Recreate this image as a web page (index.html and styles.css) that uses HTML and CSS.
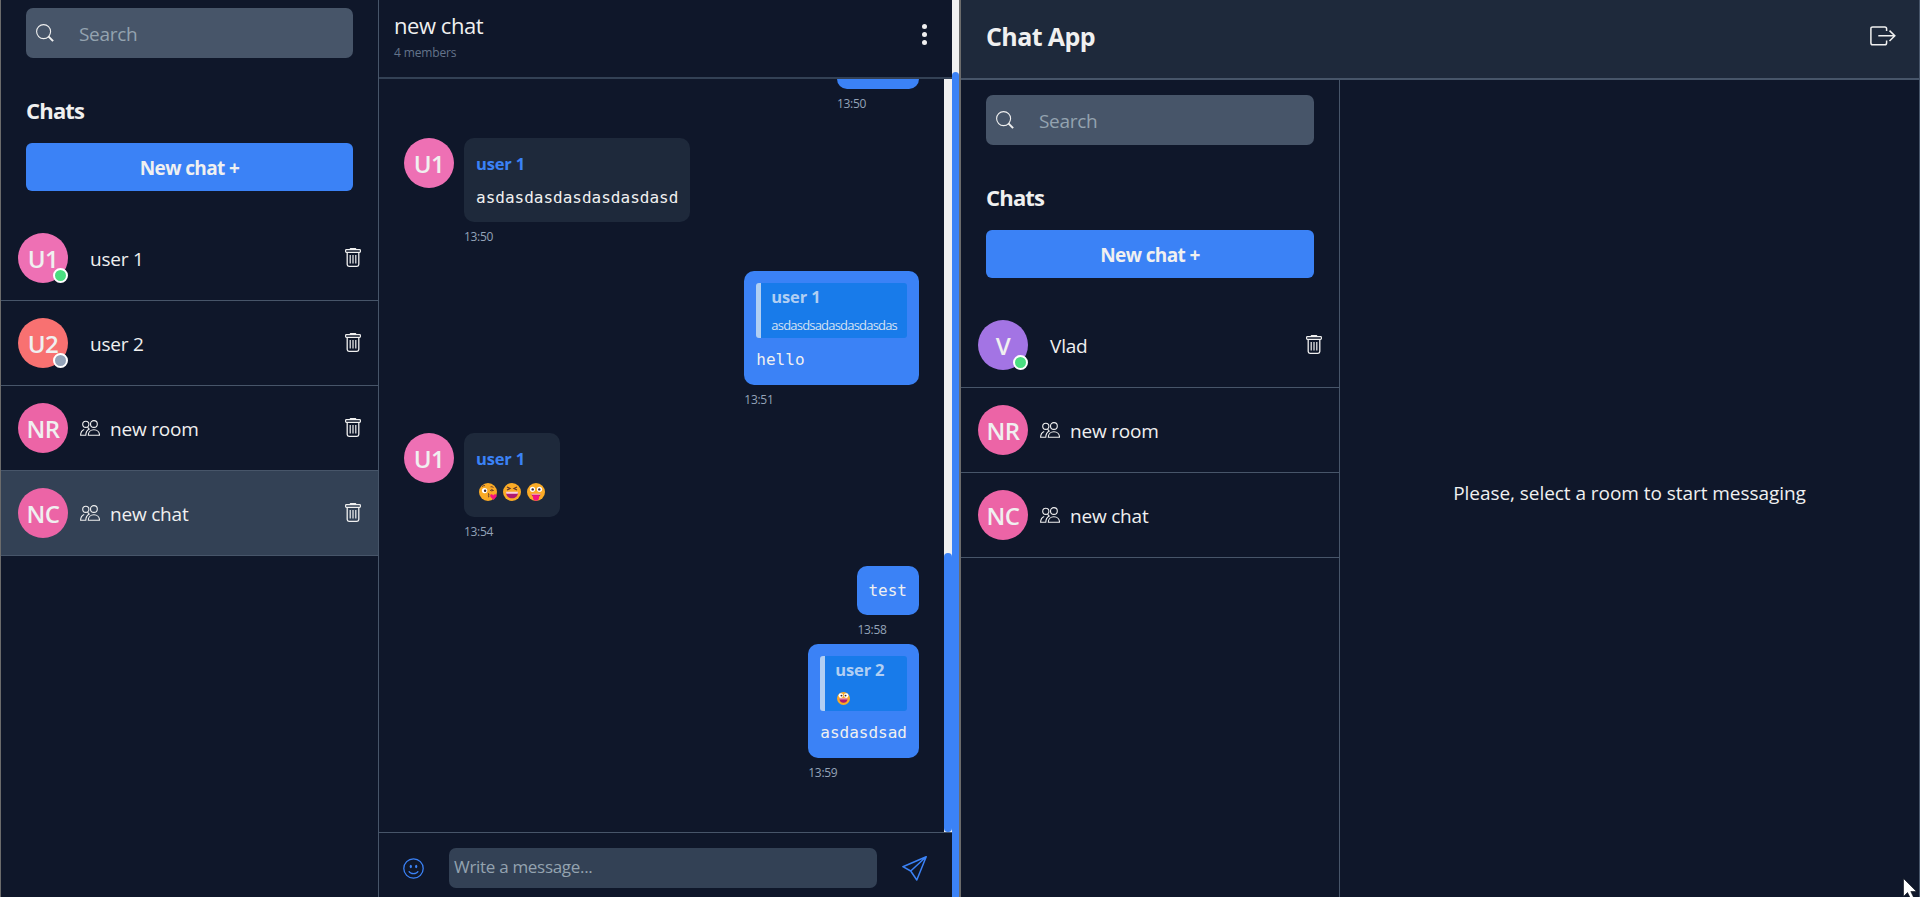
FILE: index.html
```html
<!DOCTYPE html>
<html lang="en">
<head>
<meta charset="utf-8">
<title>Chat App</title>
<link rel="stylesheet" href="styles.css">
</head>
<body>
<svg class="defs" aria-hidden="true">
  <symbol id="i-search" viewBox="0 0 18 18"><circle cx="7.6" cy="7.6" r="7" fill="none" stroke="currentColor" stroke-width="1.1"/><path d="M12.4 12.4l4.7 4.7" fill="none" stroke="currentColor" stroke-width="2"/></symbol>
  <symbol id="i-trash" viewBox="0 0 16 19"><g fill="none" stroke="currentColor"><rect x=".6" y="1.7" width="14.8" height="2.6" rx=".8" stroke-width="1.2"/><path d="M5.2 1.2c0-.5.3-.7.7-.7h4.2c.4 0 .7.2.7.7" stroke-width="1.2"/><path d="M2.2 4.5v12c0 1.2.6 1.8 1.8 1.8h8c1.200 0 1.800-.6 1.800-1.800v-12" stroke-width="1.300"/><path d="M5.200 7v8.500M8 7v8.500M10.800 7v8.500" stroke-width="1.200"/></g></symbol>
  <symbol id="i-group" viewBox="0 0 20 16"><g fill="none" stroke="currentColor" stroke-width="1.100"><circle cx="5.800" cy="4.300" r="3.100"/><circle cx="13.900" cy="4" r="3.400"/><path d="M8.300 15.200C8.300 12 10.600 9.800 13.900 9.800s5.600 2.200 5.600 5.400z"/><path d="M6.300 15.200H.6c0-3 1.300-4.900 3.600-5.800M5.800 15.200c0-3 1.300-5 3.400-6.200L7.500 7.200"/></g></symbol>
  <symbol id="i-logout" viewBox="0 0 26 20"><g fill="none" stroke="currentColor" stroke-width="1.500"><path d="M16.600 5V2.700c0-1.200-.6-1.800-1.800-1.800H2.700C1.500.9.900 1.500.9 2.700v14.200c0 1.200.6 1.800 1.800 1.800h12.100c1.200 0 1.800-.6 1.800-1.800v-2.300M8.300 9.800h16.500M19.500 4.600l5.300 5.200-5.300 5.200"/></g></symbol>
  <symbol id="i-smile" viewBox="0 0 21 21"><circle cx="10.500" cy="10.500" r="9.700" fill="none" stroke="currentColor" stroke-width="1.300"/><ellipse cx="7.800" cy="8.500" rx="1.100" ry="1.800" fill="currentColor"/><ellipse cx="13.200" cy="8.500" rx="1.100" ry="1.800" fill="currentColor"/><path d="M5.800 13.200c1.900 3.300 7.500 3.300 9.400 0" fill="none" stroke="currentColor" stroke-width="1.300"/></symbol>
  <symbol id="i-send" viewBox="0 0 25 25"><path d="M24.200.8L.9 10.700l7.800 4.300 6.100 9L24.200.8zM24.200.8L8.700 15" fill="none" stroke="currentColor" stroke-width="1.500" stroke-linejoin="round"/></symbol>
  <symbol id="e-kiss" viewBox="0 0 18 18"><circle cx="9" cy="9" r="9" fill="#fbab26"/><circle cx="5.600" cy="7.600" r="2.700" fill="#fff"/><circle cx="6.100" cy="7.800" r="1.200" fill="#402a32"/><path d="M3 3.600q1.500-1.300 3-1M11.500 3.800q1.500-.5 3 .7M11 7.800q1.500-2.500 3.500-.3l-2.500.4" fill="none" stroke="#60362d" stroke-width=".9"/><path d="M9 10.500q2 .4.300 1.700 2 .8-.3 2" fill="none" stroke="#60362d"/><path d="M14.600 17l-3.200-3.300c-1-2.400 1.800-3.200 2.800-1.300 1.300-2 4.100-.9 3.400 1.200z" fill="#f5147f"/></symbol>
  <symbol id="e-laugh" viewBox="0 0 18 18"><circle cx="9" cy="9" r="9" fill="#fbab26"/><path d="M4 4l3 1.500L4 7M14 4l-3 1.500L14 7" fill="none" stroke="#60362d" stroke-width="1.200"/><path d="M3 9h12c0 4-2.400 6.300-6 6.300S3 13 3 9z" fill="#b0196f"/><path d="M3 8.800h12l-.3 2H3.300z" fill="#fbd3df"/></symbol>
  <symbol id="e-tongue" viewBox="0 0 18 18"><circle cx="9" cy="9" r="9" fill="#fbab26"/><circle cx="5.500" cy="6.300" r="2.600" fill="#fff"/><circle cx="12.500" cy="6.300" r="2.600" fill="#fff"/><circle cx="5.700" cy="6.400" r="1.200" fill="#402a32"/><circle cx="12.300" cy="6.400" r="1.200" fill="#402a32"/><path d="M4.500 11h9c-.3 2.500-2 3.500-4.500 3.500S4.800 13.500 4.500 11z" fill="#b0196f"/><path d="M4.500 10.600h9v1.300h-9z" fill="#f4a1ad"/><path d="M6 12.300h6v2.500c0 4-6 4-6 0z" fill="#f5147f"/></symbol>
  <symbol id="e-grin" viewBox="0 0 18 18"><circle cx="9" cy="9" r="9" fill="#fbab26"/><circle cx="5.300" cy="5" r="3.200" fill="#fff"/><circle cx="12.700" cy="5" r="3.200" fill="#fff"/><circle cx="6.200" cy="5" r="1.300" fill="#402a32"/><circle cx="11.800" cy="5" r="1.300" fill="#402a32"/><path d="M3.500 9h11c0 4-2 6-5.500 6s-5.500-2-5.500-6z" fill="#b0196f"/><path d="M3.500 8.600h11v1.700h-11z" fill="#f4a1ad"/></symbol>
</svg>

<div class="screen">
  <section class="pane pane-left">
    <aside class="sidebar sidebar-scrolled">
      <div class="search"><svg class="search-icon"><use href="#i-search"/></svg><span>Search</span></div>
      <h2 class="side-title">Chats</h2>
      <button class="new-chat">New chat +</button>
      <ul class="rooms">
        <li class="room"><span class="avatar pink">U1<i class="status online"></i></span><span class="name person">user 1</span><svg class="trash"><use href="#i-trash"/></svg></li>
        <li class="room"><span class="avatar coral">U2<i class="status"></i></span><span class="name person">user 2</span><svg class="trash"><use href="#i-trash"/></svg></li>
        <li class="room"><span class="avatar rose">NR</span><svg class="group"><use href="#i-group"/></svg><span class="name">new room</span><svg class="trash"><use href="#i-trash"/></svg></li>
        <li class="room active"><span class="avatar rose">NC</span><svg class="group"><use href="#i-group"/></svg><span class="name">new chat</span><svg class="trash"><use href="#i-trash"/></svg></li>
      </ul>
    </aside>

    <main class="chat">
      <header class="chat-head">
        <div><h1 class="chat-title">new chat</h1><p class="members">4 members</p></div>
        <div class="dots"><i></i><i></i><i></i></div>
      </header>
      <div class="chat-body">
        <div class="messages">
          <div class="msg own"><div class="stack"><div class="bubble stub"></div><time>13:50</time></div></div>
          <div class="msg"><span class="avatar pink">U1</span><div class="stack"><div class="bubble"><b class="author">user 1</b><p class="text">asdasdasdasdasdasdasd</p></div><time>13:50</time></div></div>
          <div class="msg own"><div class="stack"><div class="bubble quoted"><div class="quote"><b>user 1</b><p>asdasdsadasdasdasdas</p></div><p class="text">hello</p></div><time>13:51</time></div></div>
          <div class="msg rise"><span class="avatar pink">U1</span><div class="stack"><div class="bubble"><b class="author">user 1</b><p class="emojis"><svg><use href="#e-kiss"/></svg><svg><use href="#e-laugh"/></svg><svg><use href="#e-tongue"/></svg></p></div><time>13:54</time></div></div>
          <div class="msg own tight"><div class="stack"><div class="bubble plain"><p class="text">test</p></div><time>13:58</time></div></div>
          <div class="msg own"><div class="stack"><div class="bubble quoted"><div class="quote"><b>user 2</b><svg class="mini"><use href="#e-grin"/></svg></div><p class="text">asdasdsad</p></div><time>13:59</time></div></div>
        </div>
        <div class="track inner"><div class="thumb"></div></div>
      </div>
      <footer class="composer">
        <svg class="smile"><use href="#i-smile"/></svg>
        <div class="field">Write a message...</div>
        <svg class="send"><use href="#i-send"/></svg>
      </footer>
    </main>
    <div class="track outer"><div class="thumb"></div></div>
  </section>

  <section class="pane pane-right">
    <header class="app-head"><h1 class="brand">Chat App</h1><svg class="logout"><use href="#i-logout"/></svg></header>
    <div class="app-body">
      <aside class="sidebar">
        <div class="search"><svg class="search-icon"><use href="#i-search"/></svg><span>Search</span></div>
        <h2 class="side-title">Chats</h2>
        <button class="new-chat">New chat +</button>
        <ul class="rooms">
          <li class="room"><span class="avatar violet">V<i class="status online"></i></span><span class="name person">Vlad</span><svg class="trash"><use href="#i-trash"/></svg></li>
          <li class="room"><span class="avatar rose">NR</span><svg class="group"><use href="#i-group"/></svg><span class="name">new room</span></li>
          <li class="room"><span class="avatar rose">NC</span><svg class="group"><use href="#i-group"/></svg><span class="name">new chat</span></li>
        </ul>
      </aside>
      <main class="empty">Please, select a room to start messaging</main>
    </div>
  </section>
  <svg class="cursor" viewBox="0 0 14 20"><path d="M.5.5v18l4-4 3 6 3-1.500-2.700-5.500h5.700z" fill="#fff" stroke="#050a14" stroke-width=".6"/></svg>
</div>
</body>
</html>
```

FILE: styles.css
```css
* { box-sizing: border-box; margin: 0; padding: 0; }
body { background: #0f172a; color: #f0f0f0; font-family: "Open Sans", "Noto Sans", sans-serif; font-size: 19px; overflow: hidden; }
svg { display: block; flex: none; }
.defs { display: none; }
.screen { display: grid; grid-template-columns: 961px 959px; height: 897px; position: relative; overflow: hidden; }
.pane { display: flex; min-width: 0; height: 897px; overflow: hidden; }
.pane-left { border-left: 1px solid #6b6b6b; border-right: 2px solid #6b6b6b; }
.pane-right { flex-direction: column; border-right: 1px solid #475569; }

.sidebar { width: 378px; flex: none; border-right: 1px solid #475569; padding-top: 15px; }
.sidebar-scrolled { margin-top: -7px; }
.pane-right .sidebar { width: 379px; }
.search { display: flex; align-items: center; height: 50px; margin: 0 25px; padding-left: 10px; gap: 25px; background: #475569; border-radius: 7px; color: #94a3b0; letter-spacing: -.3px; }
.search span { padding-top: 2px; }
.search-icon { width: 18px; height: 18px; color: #f0f0f0; }
.side-title { margin: 37px 25px 0; height: 30px; line-height: 30px; font-size: 22px; font-weight: 700; letter-spacing: -.8px; }
.new-chat { display: block; width: calc(100% - 50px); height: 48px; margin: 18px 25px 0; border: 0; border-radius: 6px; background: #3b82f6; color: #f0f0f0; font: 700 19px/46px "Open Sans", "Noto Sans", sans-serif; letter-spacing: -.6px; padding-top: 1px; }
.rooms { list-style: none; margin-top: 25px; }
.room { display: flex; align-items: center; height: 85px; padding: 0 17px; border-bottom: 1px solid #475569; }
.room.active { background: #334155; }
.avatar { position: relative; display: flex; flex: none; align-items: center; justify-content: center; width: 50px; height: 50px; border-radius: 50%; font-size: 24px; font-weight: 600; letter-spacing: -.5px; line-height: 50px; padding-top: 1px; }
.pink { background: #ee70b4; }
.coral { background: #f87171; }
.rose { background: #ec64a6; }
.violet { background: #a374e4; }
.status { position: absolute; right: 0; bottom: 0; width: 15px; height: 15px; border: 2px solid #fff; border-radius: 50%; background: #94a3b8; }
.online { background: #4ade80; }
.group { width: 20px; height: 16px; margin-left: 12px; }
.name { flex: 1; margin-left: 10px; padding-top: 2px; line-height: 30px; letter-spacing: -.2px; }
.name.person { margin-left: 22px; }
.trash { width: 16px; height: 19px; margin-top: -1px; }

.chat { width: 573px; flex: none; display: flex; flex-direction: column; }
.chat-head { display: flex; justify-content: space-between; height: 79px; flex: none; padding: 8px 25px 0 15px; border-bottom: 2px solid #334155; }
.chat-title { font-size: 22px; font-weight: 400; line-height: 35px; letter-spacing: -.45px; }
.members { margin-top: 1px; font-size: 12px; line-height: 17px; letter-spacing: -.15px; color: #64748b; }
.dots { display: flex; flex-direction: column; gap: 3px; padding-top: 16px; }
.dots i { width: 5px; height: 5px; border-radius: 50%; background: #f0f0f0; }
.chat-body { display: flex; flex: 1; min-height: 0; overflow: hidden; }
.messages { flex: 1; padding: 0 25px; }
.msg { display: flex; gap: 10px; margin-bottom: 20px; }
.msg.own { justify-content: flex-end; }
.msg.rise { margin-top: -1px; }
.msg.tight { margin-bottom: 0; }
.bubble { height: 84px; padding: 12px; border-radius: 10px; background: #1e293b; }
.own .bubble { background: #3b82f6; }
.bubble.stub { width: 82px; height: 10px; padding: 0; border-radius: 0 0 10px 10px; }
.bubble.plain { height: 49px; padding-left: 11px; }
.bubble.quoted { height: 114px; }
.author { display: block; padding-top: 1px; color: #3b82f6; font-size: 16.500px; line-height: 25px; letter-spacing: -.15px; }
.text { font: 16px/25px "DejaVu Sans Mono", monospace; }
.author + .text { margin-top: 9px; }
.plain .text { line-height: 25px; }
.quoted .text { line-height: 24px; }
.bubble + time { display: block; height: 29px; padding-top: 6px; font-size: 12px; line-height: 17px; color: #94a3b8; letter-spacing: -.3px; }
.quote { height: 55px; padding: 1px 10px 0; border-left: 5px solid #b1cff3; border-radius: 3px; background: #187bea; margin-bottom: 10px; }
.quote b { display: block; color: #b1cff3; font-size: 16.500px; line-height: 25px; letter-spacing: -.15px; }
.quote p { margin-top: 4px; font-size: 13px; line-height: 24px; letter-spacing: -.8px; color: #d4e1f3; }
.mini { width: 13px; height: 13px; margin: 10px 0 0 2px; }
.emojis { display: flex; gap: 6px; padding: 12px 3px 0; }
.emojis svg { width: 18px; height: 18px; }
.composer { display: flex; align-items: flex-start; height: 65px; flex: none; padding: 15px 25px 0; border-top: 1px solid #475569; color: #3b82f6; }
.smile { width: 21px; height: 21px; margin: 10px 0 0 -1px; }
.field { width: 428px; height: 40px; margin: 0 25px 0 25px; padding-left: 5px; border-radius: 7px; background: #334155; color: #94a3b0; font-size: 17px; line-height: 37px; letter-spacing: -.3px; }
.send { width: 25px; height: 25px; margin-top: 8px; }

.track { flex: none; background: #f0f0f0; display: flex; flex-direction: column; justify-content: flex-end; }
.thumb { background: #3b82f6; border-radius: 4px; }
.inner { width: 8px; }
.inner .thumb { height: 279px; }
.outer { width: 7px; }
.outer .thumb { height: 825px; border-radius: 4px 4px 0 0; }

.app-head { display: flex; justify-content: space-between; height: 80px; flex: none; padding: 0 23px 0 25px; background: #1e293b; border-bottom: 2px solid #475569; }
.brand { font-size: 25px; line-height: 73px; font-weight: 700; letter-spacing: -.6px; }
.logout { width: 26px; height: 20px; margin-top: 26px; }
.app-body { display: flex; flex: 1; }
.empty { flex: 1; display: flex; align-items: center; justify-content: center; padding-top: 9px; letter-spacing: -.05px; }
.cursor { position: absolute; left: 1903px; top: 878px; width: 14px; height: 20px; }
```
